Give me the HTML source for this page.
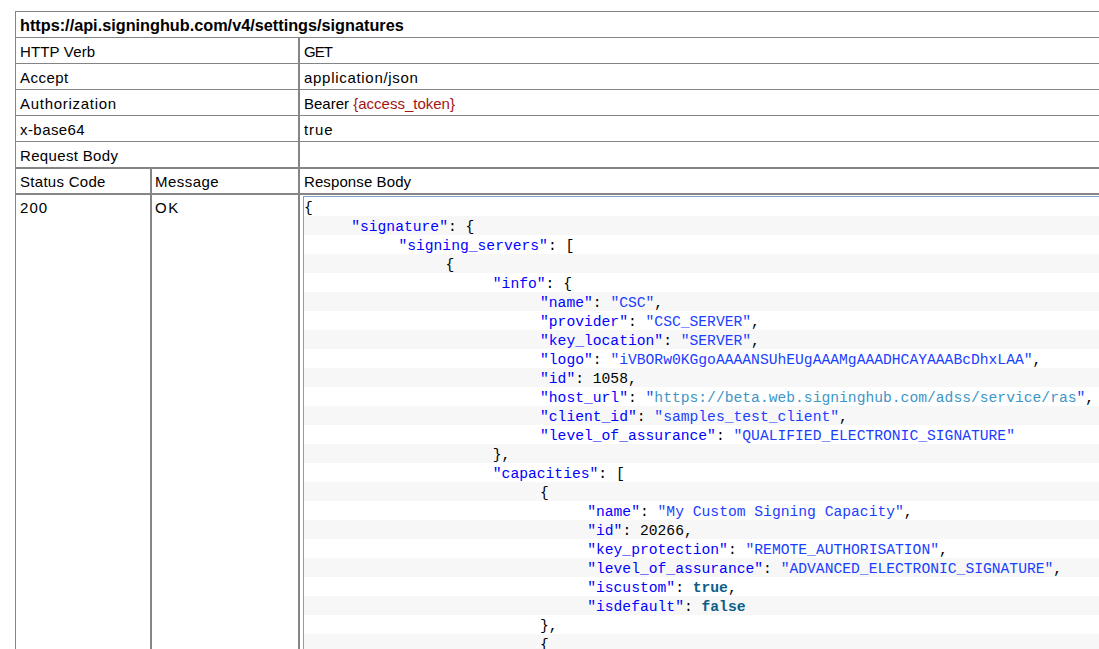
<!DOCTYPE html>
<html><head><meta charset="utf-8">
<style>
html,body{margin:0;padding:0;background:#fff;}
body{width:1099px;height:649px;overflow:hidden;position:relative;font-family:"Liberation Sans",sans-serif;color:#000;}
.h{position:absolute;background:#858585;height:1px;left:15px;right:0;}
.v{position:absolute;background:#858585;width:1px;bottom:0;}
.t{position:absolute;font-size:15px;line-height:20px;white-space:nowrap;}
.hd{position:absolute;font-size:16.25px;font-weight:bold;line-height:20px;white-space:nowrap;}
.tok{color:#a31515;}
.code{position:absolute;left:303px;top:196px;width:1000px;height:600px;border:1px solid #7f9fc5;font-family:"Liberation Mono",monospace;font-size:14.667px;color:#000;}
.ln{height:19px;line-height:23px;white-space:pre;}
.ln.odd{background:#f7f7f7;}
.k{color:#0000ff;}
.s{color:#1a40ff;}
.u{color:#3d95c8;}
.b{color:#0a5f8a;font-weight:bold;}
</style></head><body>
<div class="h" style="top:11px"></div>
<div class="h" style="top:37px"></div>
<div class="h" style="top:63px"></div>
<div class="h" style="top:89px"></div>
<div class="h" style="top:115px"></div>
<div class="h" style="top:141px"></div>
<div class="h" style="top:167px;height:2px"></div>
<div class="h" style="top:193px;height:2px"></div>
<div class="v" style="left:15px;top:11px"></div>
<div class="v" style="left:298px;top:37px;width:2px"></div>
<div class="v" style="left:150px;top:167px;width:2px"></div>

<div class="hd" style="left:20px;top:15px">https://api.signinghub.com/v4/settings/signatures</div>
<div class="t" style="left:20px;top:42px;letter-spacing:0.15px">HTTP Verb</div>
<div class="t" style="left:304px;top:42px;letter-spacing:-0.9px">GET</div>
<div class="t" style="left:20px;top:68px;letter-spacing:0.46px">Accept</div>
<div class="t" style="left:304px;top:68px;letter-spacing:0.7px">application/json</div>
<div class="t" style="left:20px;top:94px;letter-spacing:0.72px">Authorization</div>
<div class="t" style="left:304px;top:94px">Bearer <span class="tok">{access_token}</span></div>
<div class="t" style="left:20px;top:120px;letter-spacing:0.43px">x-base64</div>
<div class="t" style="left:304px;top:120px;letter-spacing:0.93px">true</div>
<div class="t" style="left:20px;top:146px;letter-spacing:0.34px">Request Body</div>
<div class="t" style="left:20px;top:172px;letter-spacing:0.29px">Status Code</div>
<div class="t" style="left:155px;top:172px;letter-spacing:0.47px">Message</div>
<div class="t" style="left:304px;top:172px;letter-spacing:0.1px">Response Body</div>
<div class="t" style="left:20px;top:198px;letter-spacing:1.05px">200</div>
<div class="t" style="left:155px;top:198px;letter-spacing:1.6px">OK</div>

<div class="code">
<div class="ln" style="padding-left:0.0px">{</div>
<div class="ln odd" style="padding-left:47.2px"><span class="k">&quot;signature&quot;</span>: {</div>
<div class="ln" style="padding-left:94.4px"><span class="k">&quot;signing_servers&quot;</span>: [</div>
<div class="ln odd" style="padding-left:141.6px">{</div>
<div class="ln" style="padding-left:188.8px"><span class="k">&quot;info&quot;</span>: {</div>
<div class="ln odd" style="padding-left:236.0px"><span class="k">&quot;name&quot;</span>: <span class="s">&quot;CSC&quot;</span>,</div>
<div class="ln" style="padding-left:236.0px"><span class="k">&quot;provider&quot;</span>: <span class="s">&quot;CSC_SERVER&quot;</span>,</div>
<div class="ln odd" style="padding-left:236.0px"><span class="k">&quot;key_location&quot;</span>: <span class="s">&quot;SERVER&quot;</span>,</div>
<div class="ln" style="padding-left:236.0px"><span class="k">&quot;logo&quot;</span>: <span class="s">&quot;iVBORw0KGgoAAAANSUhEUgAAAMgAAADHCAYAAABcDhxLAA&quot;</span>,</div>
<div class="ln odd" style="padding-left:236.0px"><span class="k">&quot;id&quot;</span>: 1058,</div>
<div class="ln" style="padding-left:236.0px"><span class="k">&quot;host_url&quot;</span>: <span class="s">&quot;</span><span class="u">https://beta.web.signinghub.com/adss/service/ras</span><span class="s">&quot;</span>,</div>
<div class="ln odd" style="padding-left:236.0px"><span class="k">&quot;client_id&quot;</span>: <span class="s">&quot;samples_test_client&quot;</span>,</div>
<div class="ln" style="padding-left:236.0px"><span class="k">&quot;level_of_assurance&quot;</span>: <span class="s">&quot;QUALIFIED_ELECTRONIC_SIGNATURE&quot;</span></div>
<div class="ln odd" style="padding-left:188.8px">},</div>
<div class="ln" style="padding-left:188.8px"><span class="k">&quot;capacities&quot;</span>: [</div>
<div class="ln odd" style="padding-left:236.0px">{</div>
<div class="ln" style="padding-left:283.2px"><span class="k">&quot;name&quot;</span>: <span class="s">&quot;My Custom Signing Capacity&quot;</span>,</div>
<div class="ln odd" style="padding-left:283.2px"><span class="k">&quot;id&quot;</span>: 20266,</div>
<div class="ln" style="padding-left:283.2px"><span class="k">&quot;key_protection&quot;</span>: <span class="s">&quot;REMOTE_AUTHORISATION&quot;</span>,</div>
<div class="ln odd" style="padding-left:283.2px"><span class="k">&quot;level_of_assurance&quot;</span>: <span class="s">&quot;ADVANCED_ELECTRONIC_SIGNATURE&quot;</span>,</div>
<div class="ln" style="padding-left:283.2px"><span class="k">&quot;iscustom&quot;</span>: <span class="b">true</span>,</div>
<div class="ln odd" style="padding-left:283.2px"><span class="k">&quot;isdefault&quot;</span>: <span class="b">false</span></div>
<div class="ln" style="padding-left:236.0px">},</div>
<div class="ln odd" style="padding-left:236.0px">{</div>
<div class="ln" style="padding-left:283.2px"><span class="k">&quot;name&quot;</span>: <span class="s">&quot;My Custom Signing Capacity 2&quot;</span>,</div>
</div>
</body></html>
